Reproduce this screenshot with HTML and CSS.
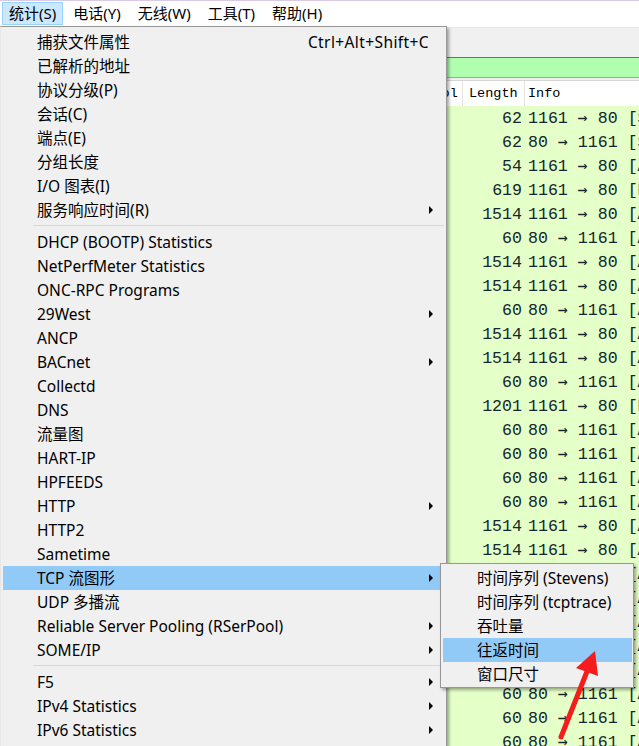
FILE: index.html
```html
<!DOCTYPE html>
<html>
<head>
<meta charset="utf-8">
<link rel="stylesheet" href="styles.css">
</head>
<body>
<div class="window">
  <div class="menubar">
    <span class="mb-item active">统计(S)</span>
    <span class="mb-item">电话(Y)</span>
    <span class="mb-item">无线(W)</span>
    <span class="mb-item">工具(T)</span>
    <span class="mb-item">帮助(H)</span>
  </div>
  <div class="toolbar"></div>
  <div class="filterbar"></div>
  <div class="gap"></div>
  <div class="packets">
    <div class="prow phead"><span class="c c1">No. Time Source Destination</span><span class="c c2">Protocol</span><span class="c c3">Length</span><span class="c c4">Info</span></div>
    <div class="prow"><span class="c c1"></span><span class="c c2">TCP</span><span class="c c3">62</span><span class="c c4">1161 <span class="ar">→</span> 80 [SYN] Seq=0 Win=8192</span></div>
    <div class="prow"><span class="c c1"></span><span class="c c2">TCP</span><span class="c c3">62</span><span class="c c4">80 <span class="ar">→</span> 1161 [SYN, ACK] Seq=0 Ack=1</span></div>
    <div class="prow"><span class="c c1"></span><span class="c c2">TCP</span><span class="c c3">54</span><span class="c c4">1161 <span class="ar">→</span> 80 [ACK] Seq=1 Ack=1</span></div>
    <div class="prow"><span class="c c1"></span><span class="c c2">TCP</span><span class="c c3">619</span><span class="c c4">1161 <span class="ar">→</span> 80 [PSH, ACK] Seq=1</span></div>
    <div class="prow"><span class="c c1"></span><span class="c c2">TCP</span><span class="c c3">1514</span><span class="c c4">1161 <span class="ar">→</span> 80 [ACK] Seq=566</span></div>
    <div class="prow"><span class="c c1"></span><span class="c c2">TCP</span><span class="c c3">60</span><span class="c c4">80 <span class="ar">→</span> 1161 [ACK] Seq=1</span></div>
    <div class="prow"><span class="c c1"></span><span class="c c2">TCP</span><span class="c c3">1514</span><span class="c c4">1161 <span class="ar">→</span> 80 [ACK] Seq=2026</span></div>
    <div class="prow"><span class="c c1"></span><span class="c c2">TCP</span><span class="c c3">1514</span><span class="c c4">1161 <span class="ar">→</span> 80 [ACK] Seq=3486</span></div>
    <div class="prow"><span class="c c1"></span><span class="c c2">TCP</span><span class="c c3">60</span><span class="c c4">80 <span class="ar">→</span> 1161 [ACK] Seq=1</span></div>
    <div class="prow"><span class="c c1"></span><span class="c c2">TCP</span><span class="c c3">1514</span><span class="c c4">1161 <span class="ar">→</span> 80 [ACK] Seq=4946</span></div>
    <div class="prow"><span class="c c1"></span><span class="c c2">TCP</span><span class="c c3">1514</span><span class="c c4">1161 <span class="ar">→</span> 80 [ACK] Seq=6406</span></div>
    <div class="prow"><span class="c c1"></span><span class="c c2">TCP</span><span class="c c3">60</span><span class="c c4">80 <span class="ar">→</span> 1161 [ACK] Seq=1</span></div>
    <div class="prow"><span class="c c1"></span><span class="c c2">TCP</span><span class="c c3">1201</span><span class="c c4">1161 <span class="ar">→</span> 80 [PSH, ACK] Seq=7866</span></div>
    <div class="prow"><span class="c c1"></span><span class="c c2">TCP</span><span class="c c3">60</span><span class="c c4">80 <span class="ar">→</span> 1161 [ACK] Seq=1</span></div>
    <div class="prow"><span class="c c1"></span><span class="c c2">TCP</span><span class="c c3">60</span><span class="c c4">80 <span class="ar">→</span> 1161 [ACK] Seq=1</span></div>
    <div class="prow"><span class="c c1"></span><span class="c c2">TCP</span><span class="c c3">60</span><span class="c c4">80 <span class="ar">→</span> 1161 [ACK] Seq=1</span></div>
    <div class="prow"><span class="c c1"></span><span class="c c2">TCP</span><span class="c c3">60</span><span class="c c4">80 <span class="ar">→</span> 1161 [ACK] Seq=1</span></div>
    <div class="prow"><span class="c c1"></span><span class="c c2">TCP</span><span class="c c3">1514</span><span class="c c4">1161 <span class="ar">→</span> 80 [ACK] Seq=9013</span></div>
    <div class="prow"><span class="c c1"></span><span class="c c2">TCP</span><span class="c c3">1514</span><span class="c c4">1161 <span class="ar">→</span> 80 [ACK] Seq=10473</span></div>
    <div class="prow"><span class="c c1"></span><span class="c c2">TCP</span><span class="c c3">1514</span><span class="c c4">1161 <span class="ar">→</span> 80 [ACK] Seq=11933</span></div>
    <div class="prow"><span class="c c1"></span><span class="c c2">TCP</span><span class="c c3">60</span><span class="c c4">80 <span class="ar">→</span> 1161 [ACK] Seq=1</span></div>
    <div class="prow"><span class="c c1"></span><span class="c c2">TCP</span><span class="c c3">1514</span><span class="c c4">1161 <span class="ar">→</span> 80 [ACK] Seq=13393</span></div>
    <div class="prow"><span class="c c1"></span><span class="c c2">TCP</span><span class="c c3">60</span><span class="c c4">80 <span class="ar">→</span> 1161 [ACK] Seq=1</span></div>
    <div class="prow"><span class="c c1"></span><span class="c c2">TCP</span><span class="c c3">60</span><span class="c c4">80 <span class="ar">→</span> 1161 [ACK] Seq=1</span></div>
    <div class="prow"><span class="c c1"></span><span class="c c2">TCP</span><span class="c c3">60</span><span class="c c4">80 <span class="ar">→</span> 1161 [ACK] Seq=1</span></div>
    <div class="prow"><span class="c c1"></span><span class="c c2">TCP</span><span class="c c3">60</span><span class="c c4">80 <span class="ar">→</span> 1161 [ACK] Seq=1</span></div>
    <div class="prow"><span class="c c1"></span><span class="c c2">TCP</span><span class="c c3">60</span><span class="c c4">80 <span class="ar">→</span> 1161 [ACK] Seq=1</span></div>
  </div>

  <div class="menu">
    <div class="mi"><span class="lbl">捕获文件属性</span><span class="sc">Ctrl+Alt+Shift+C</span></div>
    <div class="mi"><span class="lbl">已解析的地址</span></div>
    <div class="mi"><span class="lbl">协议分级(P)</span></div>
    <div class="mi"><span class="lbl">会话(C)</span></div>
    <div class="mi"><span class="lbl">端点(E)</span></div>
    <div class="mi"><span class="lbl">分组长度</span></div>
    <div class="mi"><span class="lbl">I/O 图表(I)</span></div>
    <div class="mi"><span class="lbl">服务响应时间(R)</span><span class="arr"></span></div>
    <div class="sep"></div>
    <div class="mi"><span class="lbl">DHCP (BOOTP) Statistics</span></div>
    <div class="mi"><span class="lbl">NetPerfMeter Statistics</span></div>
    <div class="mi"><span class="lbl">ONC-RPC Programs</span></div>
    <div class="mi"><span class="lbl">29West</span><span class="arr"></span></div>
    <div class="mi"><span class="lbl">ANCP</span></div>
    <div class="mi"><span class="lbl">BACnet</span><span class="arr"></span></div>
    <div class="mi"><span class="lbl">Collectd</span></div>
    <div class="mi"><span class="lbl">DNS</span></div>
    <div class="mi"><span class="lbl">流量图</span></div>
    <div class="mi"><span class="lbl">HART-IP</span></div>
    <div class="mi"><span class="lbl">HPFEEDS</span></div>
    <div class="mi"><span class="lbl">HTTP</span><span class="arr"></span></div>
    <div class="mi"><span class="lbl">HTTP2</span></div>
    <div class="mi"><span class="lbl">Sametime</span></div>
    <div class="mi hl"><span class="lbl">TCP 流图形</span><span class="arr"></span></div>
    <div class="mi"><span class="lbl">UDP 多播流</span></div>
    <div class="mi"><span class="lbl">Reliable Server Pooling (RSerPool)</span><span class="arr"></span></div>
    <div class="mi"><span class="lbl">SOME/IP</span><span class="arr"></span></div>
    <div class="sep"></div>
    <div class="mi"><span class="lbl">F5</span><span class="arr"></span></div>
    <div class="mi"><span class="lbl">IPv4 Statistics</span><span class="arr"></span></div>
    <div class="mi"><span class="lbl">IPv6 Statistics</span><span class="arr"></span></div>
  </div>

  <div class="submenu">
    <div class="mi"><span class="lbl">时间序列 (Stevens)</span></div>
    <div class="mi"><span class="lbl">时间序列 (tcptrace)</span></div>
    <div class="mi"><span class="lbl">吞吐量</span></div>
    <div class="mi hl"><span class="lbl">往返时间</span></div>
    <div class="mi"><span class="lbl">窗口尺寸</span></div>
  </div>

  <svg class="annot" viewBox="0 0 639 746" width="639" height="746">
    <line x1="561" y1="737" x2="588" y2="669" stroke="#f41c1c" stroke-width="5" stroke-linecap="round"/>
    <polygon points="595,651 576,668 598,676" fill="#f41c1c"/>
  </svg>
</div>
</body>
</html>
```

FILE: styles.css
```css
* { box-sizing: border-box; }
html, body { margin: 0; padding: 0; }
body {
  width: 639px;
  height: 746px;
  overflow: hidden;
  background: #f0f0f0;
  font-family: "Noto Sans", "Noto Sans CJK SC", sans-serif;
}
.window {
  position: relative;
  width: 639px;
  height: 746px;
  overflow: hidden;
}

/* menu bar */
.menubar {
  height: 27px;
  background: #fff;
  border-top: 1px solid #d9cbe6;
  display: flex;
  align-items: flex-start;
  padding: 1px 0 0 2px;
  font-size: 15px;
  color: #000;
}
.mb-item {
  height: 23px;
  line-height: 21px;
  padding: 0 6px;
  margin-right: 3px;
  border: 1px solid transparent;
  white-space: nowrap;
}
.mb-item.active {
  background: #cce8ff;
  border-color: #99d1ff;
}

/* toolbar + filter */
.toolbar {
  height: 30px;
  background: #f0f0f0;
  border-top: 1px solid #e6e6e6;
}
.filterbar {
  height: 21px;
  background: #afffaf;
  border-top: 1px solid #6f6f6f;
  border-bottom: 1px solid #a5a5a5;
}
.gap { height: 2px; }

/* packet list */
.packets { background: #fff; }
.prow {
  display: grid;
  grid-template-columns: 390px 73px 62px 1fr;
  height: 24px;
  align-items: center;
  white-space: nowrap;
  overflow: hidden;
  background: #e4ffc7;
  color: #12272e;
  font-family: "Liberation Mono", "DejaVu Sans Mono", monospace;
  font-size: 16.6px;
}
.prow .c { overflow: hidden; }
.prow .c3 { text-align: right; padding-right: 3px; }
.prow .c4 { padding-left: 3px; }
.prow .ar {
  font-family: "DejaVu Sans Mono", monospace;
  font-size: 16.6px;
}
.phead {
  height: 26px;
  background: #fff;
  color: #000;
  border-top: 1px solid #d5d5d5;
  font-size: 13.5px;
  align-items: stretch;
}
.phead .c {
  display: flex;
  align-items: center;
  border-right: 1px solid #e3e3e3;
  padding-left: 3px;
}
.phead .c3 { text-align: left; padding-left: 6px; padding-right: 0; }
.phead .c4 { border-right: none; padding-left: 3px; }

/* dropdown menu */
.menu, .submenu {
  position: absolute;
  background: #f0f0f0;
  border: 1px solid #979797;
  box-shadow: 2px 2px 3px rgba(0, 0, 0, 0.35);
  font-size: 15.5px;
  color: #000;
}
.menu {
  left: 0;
  top: 26px;
  width: 447px;
  height: 740px;
  border-left-color: #e6e6e6;
  padding: 3px 5px 0 2px;
}
.submenu {
  left: 440px;
  top: 563px;
  width: 194px;
  padding: 2px 1px 1px 2px;
}
.mi {
  height: 24px;
  line-height: 24px;
  display: flex;
  align-items: center;
  padding: 0 8px 0 34px;
  white-space: nowrap;
}
.mi.hl { background: #91c9f7; }
.mi .lbl { flex: 1; }
.mi .sc { margin-right: 4px; letter-spacing: 0.4px; }
.arr {
  width: 0;
  height: 0;
  border-left: 4px solid #000;
  border-top: 4px solid transparent;
  border-bottom: 4px solid transparent;
}
.sep {
  height: 8px;
  margin: 0 -3px 0 30px;
  padding-top: 3px;
}
.sep::before {
  content: "";
  display: block;
  height: 1px;
  background: #d7d7d7;
}

/* annotation */
.annot {
  position: absolute;
  left: 0;
  top: 0;
  pointer-events: none;
}
```
